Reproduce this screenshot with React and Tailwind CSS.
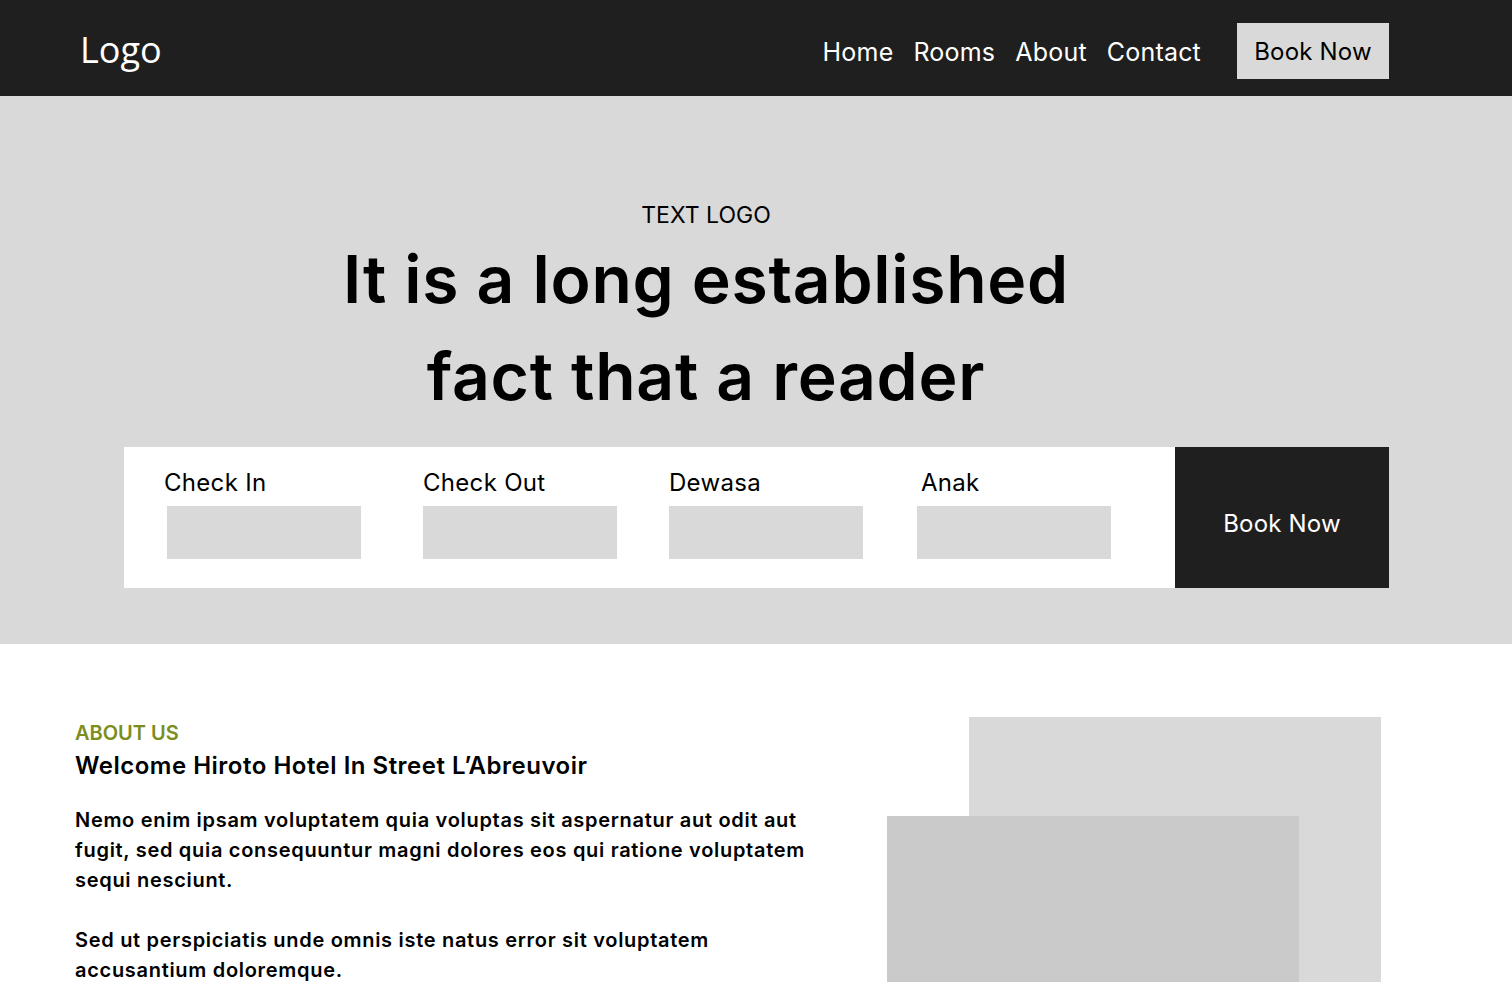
import React from 'react';

const fields = [
    { label: 'Check In', labelClass: 'ml-[40px]', inputClass: 'ml-[43px]' },
    { label: 'Check Out', labelClass: 'ml-[299px]', inputClass: 'ml-[299px]' },
    { label: 'Dewasa', labelClass: 'ml-[545px]', inputClass: 'ml-[545px]' },
    { label: 'Anak', labelClass: 'ml-[797px]', inputClass: 'ml-[793px]' },
];

const App = () => {
    return (
        <div className="min-h-screen bg-white font-['Inter',sans-serif] text-black">
            {/* Navbar */}
            <nav className="h-[96px] bg-[#1f1f1f] flex items-center justify-between pl-[80px] pr-[123px]">
                <div className="mt-[3px] text-white text-[36px] font-['Open_Sans',sans-serif] leading-none">Logo</div>
                <div className="flex items-center pt-[6px]">
                    <ul className="flex items-center gap-[20px] pt-[3px] text-white text-[25px] tracking-[0.2px]">
                        <li>Home</li>
                        <li>Rooms</li>
                        <li>About</li>
                        <li>Contact</li>
                    </ul>
                    <button className="ml-[36px] h-[56px] w-[152px] bg-[#d9d9d9] text-black text-[24px] pt-[2px] tracking-[0.2px]">
                        Book Now
                    </button>
                </div>
            </nav>

            {/* Hero */}
            <section className="bg-[#d9d9d9] h-[548px] pt-[103px]">
                <div className="flex flex-col items-center pr-[100px]">
                    <p className="text-[23px] leading-[32px]">TEXT LOGO</p>
                    <h1 className="text-[66px] leading-[97px] font-semibold text-center tracking-[0.7px]">
                        It is a long established<br />fact that a reader
                    </h1>
                </div>

                {/* Booking bar */}
                <div className="mt-[22px] ml-[124px] w-[1265px] h-[141px] flex">
                    <div className="flex-1 bg-white relative">
                        {fields.map((f) => (
                            <div key={f.label} className="absolute top-0 left-0">
                                <p className={`${f.labelClass} mt-[20px] text-[24px] leading-[32px] tracking-[0.3px]`}>{f.label}</p>
                                <div className={`${f.inputClass} mt-[7px] w-[194px] h-[53px] bg-[#d9d9d9]`} />
                            </div>
                        ))}
                    </div>
                    <button className="w-[214px] bg-[#1f1f1f] text-white text-[24px] pt-[12px] tracking-[0.2px]">Book Now</button>
                </div>
            </section>

            {/* About */}
            <section className="flex pt-[75px] pl-[75px]">
                <div className="w-[740px]">
                    <p className="text-[#7b8d1c] text-[20px] font-semibold leading-[28px]">ABOUT US</p>
                    <h2 className="mt-[3px] text-[24px] font-semibold leading-[32px] tracking-[0.5px]">Welcome Hiroto Hotel In Street L’Abreuvoir</h2>
                    <p className="mt-[23px] text-[20px] font-semibold leading-[30px] tracking-[0.7px]">
                        Nemo enim ipsam voluptatem quia voluptas sit aspernatur aut odit aut fugit, sed quia consequuntur magni dolores eos qui ratione voluptatem sequi nesciunt.
                    </p>
                    <p className="mt-[30px] text-[20px] font-semibold leading-[30px] tracking-[0.7px]">
                        Sed ut perspiciatis unde omnis iste natus error sit voluptatem accusantium doloremque.
                    </p>
                </div>
                <div className="relative -mt-[2px] ml-[72px] w-[494px] h-[420px]">
                    <div className="absolute left-[82px] top-0 w-[412px] h-[400px] bg-[#d9d9d9]" />
                    <div className="absolute left-0 top-[99px] w-[412px] h-[300px] bg-[#cacaca]" />
                </div>
            </section>
        </div>
    );
};

export default App;
